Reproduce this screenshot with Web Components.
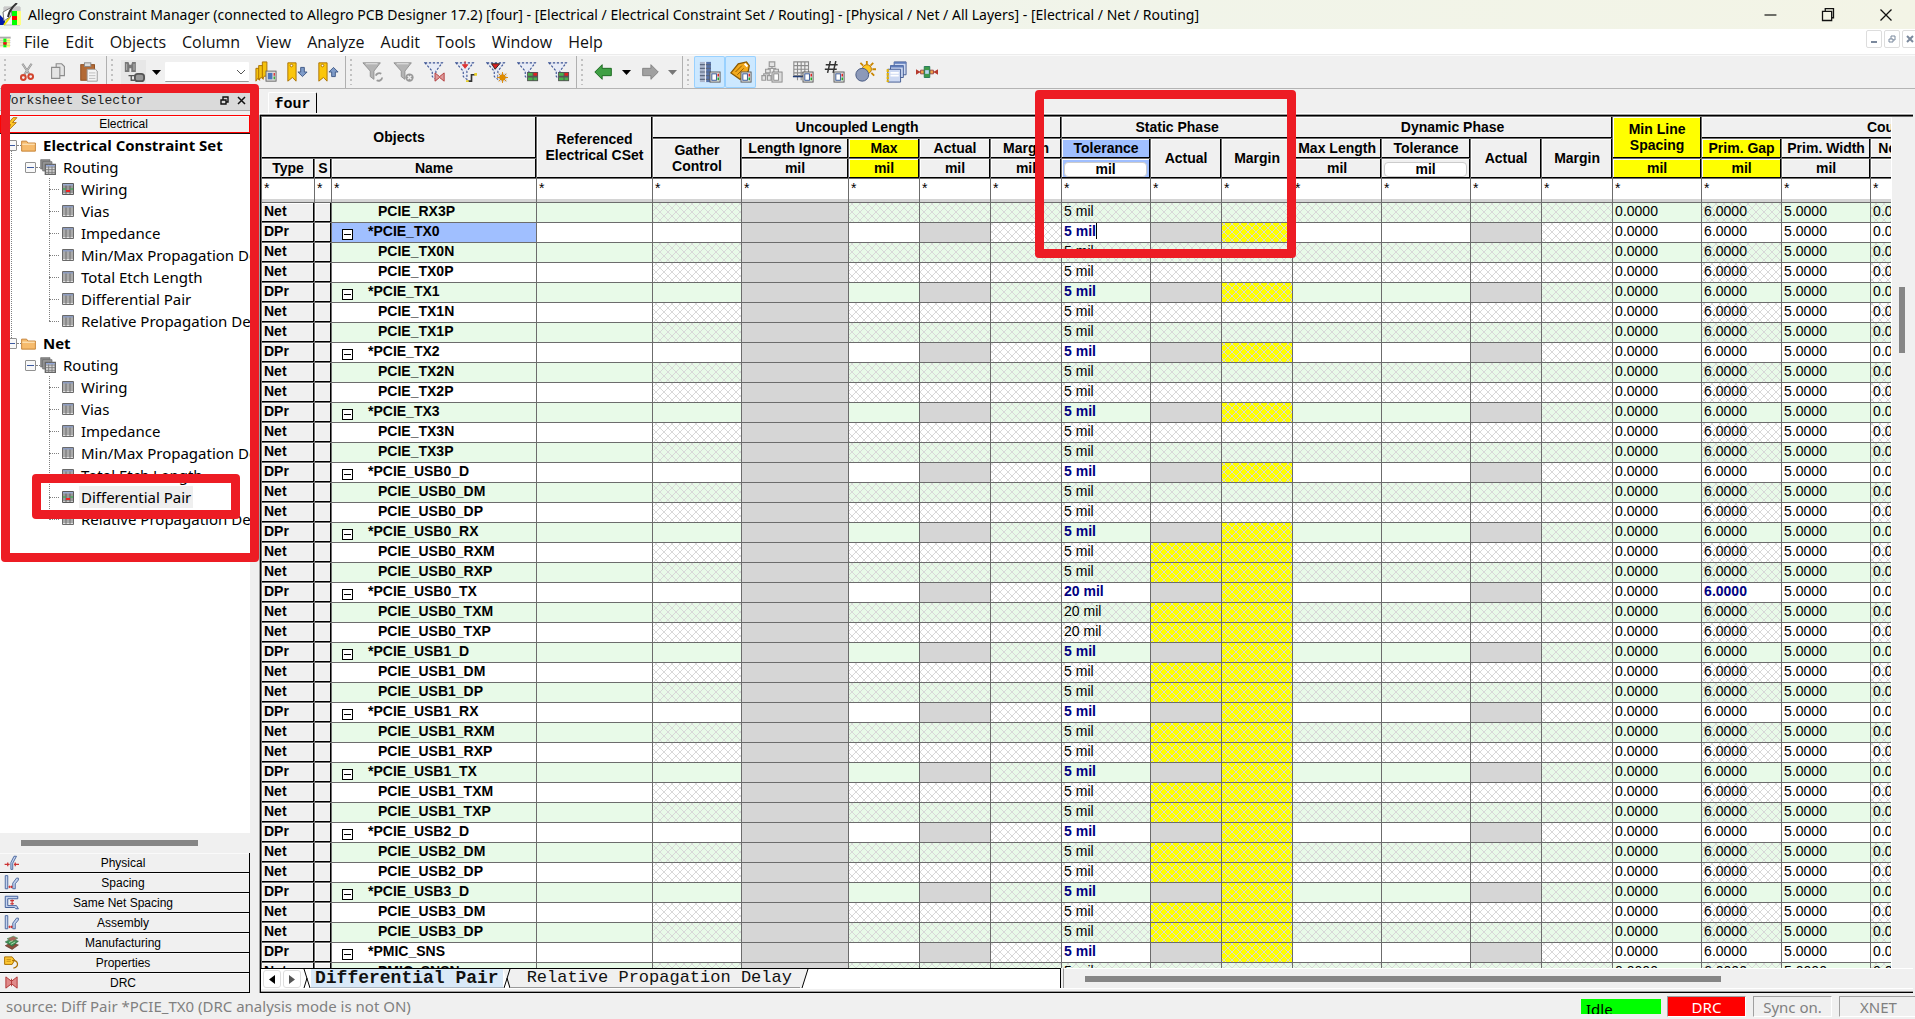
<!DOCTYPE html>
<html lang="en">
<head>
<meta charset="utf-8">
<title>Allegro Constraint Manager</title>
<style>
html, body { height: 100%; margin: 0; }
body { background: #f0f0f0; overflow: hidden; font: 14px "Liberation Sans", Arial, sans-serif; color: #000; }
</style>
</head>
<body>
<cm-app></cm-app>
<script>
const ICONS = {
  app: `<path d="M4 4h16v18h-16z" fill="#f4f4f4" stroke="#bbb"/><path d="M4 4h16v4h-16z" fill="#c9c9c9"/><path d="M12 8h5v14h-5z" fill="#0f0"/><path d="M17 8h4v14h-4z" fill="#ffff80"/><path d="M12 13h5v4h-5z" fill="#f00"/><path d="M0 12 3 15 5 13v9h-5z" fill="#0018a8"/><path d="M4 22 10 14" stroke="#e8e000" stroke-width="2"/><path d="M3 9 12 4l-1 9-7 5z" fill="#fff" stroke="#777"/><path d="M8 14C9 8 12 4 17 0" stroke="#333" stroke-width="2" fill="none"/>`,
  doc: `<path d="M0 4h16v3h-16z" fill="#aaa"/><path d="M0 7h5v13h-5z" fill="#f7e7c8"/><path d="M5 7h5v13h-5z" fill="#0f0"/><path d="M10 7h5v13h-5z" fill="#ff8"/><path d="M5 12h5v4h-5z" fill="#f00"/><path d="M0 10h16M0 13h16M0 17h16" stroke="#888" stroke-width=".5"/>`,
  cut: `<path d="M7 3 15 15M17 3 9 15" stroke="#8d8d8d" stroke-width="2.4"/><path d="M7 3 15 15M17 3 9 15" stroke="#d8d8d8" stroke-width=".8"/><circle cx="8" cy="18" r="2.6" fill="none" stroke="#d2452f" stroke-width="2.2"/><circle cx="16" cy="17" r="2.6" fill="none" stroke="#d2452f" stroke-width="2.2"/>`,
  copy: `<g fill="#e4e4e4" stroke="#8c8c8c" stroke-width="1.2"><path d="M10 3h6l3 3v10h-9z"/><path d="M5 7h9v12H5z"/></g>`,
  paste: `<rect x="3" y="4" width="15" height="17" fill="#b36a35" stroke="#8a4a1c"/><rect x="7" y="2" width="7" height="4" fill="#ddd" stroke="#888"/><path d="M10 9h9l2 2v11h-11z" fill="#f4f4f4" stroke="#999"/><path d="M12 13h7M12 16h7M12 19h7" stroke="#bbb"/>`,
  find: `<path d="M2 1h4l1 3h2l1-3h4v11h-5V8H7v4H2z" fill="#777"/><path d="M4 3v7M12 3v7" stroke="#bbb"/><rect x="13" y="14" width="10" height="8" rx="3" fill="#999" stroke="#555" stroke-width="2"/><path d="M6 16h7M9 16v5h4" stroke="#555" stroke-width="1.5" fill="none"/>`,
  marks: `<g fill="#f4c20d" stroke="#a86d00"><path d="M1 8h4v13l-2-2-2 3z"/><path d="M4 5h5v15l-2-2-3 2z"/><path d="M8 1h5v17l-2-2-3 3z"/></g><rect x="12" y="11" width="11" height="11" fill="#ddd" stroke="#666"/><rect x="14" y="13" width="5" height="7" fill="#4d76ba"/><path d="M21 13v3" stroke="#d33" stroke-width="1.5"/><path d="M21 17v3" stroke="#3a3" stroke-width="1.5"/>`,
  markdown: `<path d="M2 2h9v20l-4-4-5 4z" fill="#fbc60a" stroke="#a86d00"/><circle cx="6" cy="5" r="1.4" fill="#fff" stroke="#a86d00"/><path d="M16 7h4v5h3l-5 5-5-5h3z" fill="#7e9bc8" stroke="#3b5584"/>`,
  markup: `<path d="M2 2h9v20l-4-4-5 4z" fill="#fbc60a" stroke="#a86d00"/><circle cx="6" cy="5" r="1.4" fill="#fff" stroke="#a86d00"/><path d="M16 17h4v-5h3l-5-5-5 5h3z" fill="#7e9bc8" stroke="#3b5584"/>`,
  funref: `<path d="M1 2h19l-7 9v9l-4-3v-6z" fill="#b4b4b4" stroke="#8f8f8f"/><path d="M4 3h13" stroke="#eee"/><path d="M15 16a4 4 0 0 1 6-2M22 18a4 4 0 0 1-6 3" fill="none" stroke="#999" stroke-width="2"/>`,
  funoff: `<path d="M1 2h19l-7 9v9l-4-3v-6z" fill="#b4b4b4" stroke="#8f8f8f"/><path d="M4 3h13" stroke="#eee"/><circle cx="18" cy="18" r="4.5" fill="#999"/><path d="M16 16l4 4M20 16l-4 4" stroke="#eee" stroke-width="1.5"/>`,
  fun: `<path d="M1 2h19l-7 9v9l-4-3v-6z" fill="#e8ecf6" stroke="#3a5293" stroke-width="1.2" stroke-dasharray="2.5 1.8"/>`,
  grid4: `<rect x="11" y="12" width="12" height="10" fill="#555"/><path d="M12 13h5v3h-5zM12 18h5v3h-5zM18 18h4v3h-4z" fill="#4bb04b"/><path d="M18 13h4v3h-4z" fill="#e02020"/>`,
  back: `<path d="M2 12 10 4v4h10v8H10v4z" fill="#3fa044" stroke="#17651d"/>`,
  fwd: `<path d="M21 12 13 4v4H4v8h9v4z" fill="#a0a0a0" stroke="#808080"/>`,
  panel: `<rect x="12" y="12" width="11" height="11" fill="#e8e8e8" stroke="#555"/><rect x="14" y="14" width="5" height="7" fill="#fff" stroke="#2d4f90"/><path d="M21 14v3" stroke="#d22" stroke-width="1.6"/><path d="M21 18v3" stroke="#2a2" stroke-width="1.6"/>`,
  list: `<path d="M1 1h12v22H1z" fill="#aab6cc"/><path d="M8 1h5v22H8z" fill="#5672a8"/><path d="M1 4h12M1 8h12M1 12h12M1 16h12M1 20h12" stroke="#5b6880" stroke-width="1.3"/><path d="M7 1v22" stroke="#fff"/>`,
  tag: `<path d="M1 13 9 3l9-2 3 4-1 6-9 9z" fill="#f2a91d" stroke="#8a5800" stroke-width="1.4"/><path d="M6 12l7-7M8 15l7-7" stroke="#8a5800"/><path d="M16 3l3 3" stroke="#fff" stroke-width="2"/>`,
  tree: `<g fill="#e4e4e4" stroke="#999" stroke-width="1.3"><path d="M9 1h6v5H9zM5 9h5v4H5zM14 9h5v4h-5zM1 16h4v5H1zM7 16h4v5H7z"/><path d="M12 6v2M8 9V8h8v1M3 16v-2h6v2" fill="none"/></g>`,
  table: `<path d="M2 1h16v15H2zM6 1v20M10 1v20M14 1v15M2 5h16M2 9h16M2 13h16" fill="none" stroke="#8b8b8b" stroke-width="1.2"/><path d="M1 17h12" stroke="#223d77" stroke-width="1.5"/>`,
  hash: `<path d="M8 0 5 13M14 0 11 13M3 4h13M2 9h13" stroke="#333" stroke-width="1.6"/>`,
  sun: `<circle cx="14" cy="9" r="5" fill="#ffc820" stroke="#b36c00"/><path d="M14 0v4M21 2l-3 3M24 9h-4M22 16l-3-3M7 2l3 3" stroke="#c98600" stroke-width="2"/><circle cx="9" cy="15" r="7" fill="#8c99b8" stroke="#44567f"/>`,
  windows: `<g fill="#cdd9f2" stroke="#3d568e"><path d="M10 1h13v14H10z"/><path d="M6 5h14v13H6z"/><path d="M3 9h14v14H3z"/></g><path d="M10 2h13M6 6h14" stroke="#5f7cba" stroke-width="2"/><path d="M6 13h9M6 16h9" stroke="#fff" stroke-width="2"/><path d="M3 9v14" stroke="#e6b400" stroke-width="2.5" stroke-dasharray="3 1"/>`,
  net: `<path d="M4 12h16" stroke="#c33" stroke-width="2"/><path d="M0 9 5 12 0 15zM24 9 19 12 24 15z" fill="#b53a2e"/><path d="M5 10h4v4H5zM15 10h4v4h-4z" fill="#f3a24a" stroke="#944"/><path d="M9 6h6v12H9z" fill="#3e9b4a" stroke="#275"/><path d="M10 10h4v4h-4z" fill="#b7d4f3"/>`,
  bolt: `<path d="M13 1 4 12h5L5 22 18 9h-6l7-8z" fill="#ffc928" stroke="#b06a00" stroke-width="1.4"/>`,
  folder: `<path d="M1 5h8l2 3h12v13H1z" fill="#f6bb6d" stroke="#c07a2b" stroke-width="1.4"/><path d="M2 10h20" stroke="#fde2b6" stroke-width="2"/>`,
  sheets: `<path d="M1 1h14v14H1z" fill="#8a8a8a" stroke="#666"/><path d="M4 4h14v14H4z" fill="#999" stroke="#666"/><path d="M8 8h15v15H8z" fill="#d8d8d8" stroke="#666" stroke-width="2"/><path d="M8 12h15M8 16h15M8 20h15M13 8v15M18 8v15" stroke="#777" stroke-width="1.3"/><path d="M9 9h13v2H9z" fill="#93a7d8"/>`,
  sheet: `<path d="M1 1h22v22H1z" fill="#e0e0e0" stroke="#6a6a6a" stroke-width="2"/><path d="M1 6h22M1 10h22M1 14h22M1 18h22M8 1v22M16 1v22" stroke="#6a6a6a" stroke-width="1.8"/><path d="M2 2h20v3H2z" fill="#8d9cc0"/>`,
  sheeton: `<path d="M1 1h22v22H1z" fill="#ccc" stroke="#5a5a5a" stroke-width="2"/><path d="M1 6h22M1 10h22M1 14h22M1 18h22M8 1v22M16 1v22" stroke="#5a5a5a" stroke-width="1.8"/><path d="M2 2h20v3H2z" fill="#9aabd0"/><path d="M2 11h5v2H2zM17 11h5v2h-5z" fill="#1fb53c"/><path d="M8 14h8v4H8z" fill="#e22"/>`,
  physical: `<path d="M11 23V12L16 2h4L14 13v10z" fill="#c5d3ee" stroke="#4a669e" stroke-width="1.5"/><path d="M1 15h8M6 12v6M24 15h-8M18 12v6" stroke="#c33" stroke-width="2"/>`,
  spacing: `<path d="M2 1h4v21H2zM14 22V13L20 5h3v3L18 14v8z" fill="#c5d3ee" stroke="#4a669e" stroke-width="1.5"/><path d="M7 19h7M9 17v4M12 17v4" stroke="#c33" stroke-width="1.6"/>`,
  same: `<path d="M2 2h20v4H6v11h14l3 5h-4l-2-2H2z" fill="#c5d3ee" stroke="#3e5b97" stroke-width="1.5"/><path d="M13 7v9M10 9h6M10 14h6" stroke="#c33" stroke-width="1.8"/>`,
  board: `<path d="M2 17 12 12l11 4-10 7z" fill="#8b4f3c" stroke="#5a3428"/><path d="M2 11 12 6l11 4-10 8z" fill="#3f9155" stroke="#2d633c"/><path d="M5 6 15 2l7 3-9 6z" fill="#a8675b" stroke="#3f9155"/><path d="M8 12l6-3M11 15l7-4" stroke="#b5deb0" stroke-width="1.5"/>`,
  prop: `<path d="M1 3h12l4 5-4 7H1z" fill="#ffc935" stroke="#a97000" stroke-width="1.6"/><path d="M4 7h7M4 10h7" stroke="#a97000"/><path d="M13 9c10-2 12 10 2 12" fill="none" stroke="#a97000" stroke-width="2"/>`,
  drc: `<path d="M3 3 12 10 21 3v18L12 14 3 21z" fill="#e08a8a" stroke="#b23a3a" stroke-width="1.6"/><path d="M12 6v12" stroke="#b23a3a" stroke-width="1.5"/>`,
  min: `<path d="M6 12h13" stroke="#111" stroke-width="1.3"/>`,
  restore: `<path d="M6 8h10v10H6zM9 8V5h9v10h-2" fill="none" stroke="#111" stroke-width="1.4"/>`,
  close: `<path d="M6 6l12 12M18 6 6 18" stroke="#111" stroke-width="1.4"/>`
};
ICONS.fundrc = ICONS.fun + `<path d="M12 13l5 4 5-4v9l-5-4-5 4z" fill="#d99" stroke="#b23a3a"/>`;
ICONS.funpath = ICONS.fun + `<path d="M11 0v6M8 4l3 4 3-4z" stroke="#d33" fill="#d33"/><path d="M14 22h4v-7h4" fill="none" stroke="#333" stroke-width="1.8"/><path d="M21 13h3v3h-3zM12 21h3v2h-3z" fill="#e8cf2a"/>`;
ICONS.funsun = ICONS.fun + `<path d="M6 3h9l-5 6z" fill="#d22" stroke="#222"/><path d="M13 13h10v10h-10z" fill="#ddd"/><circle cx="18" cy="18" r="3" fill="#fb0" stroke="#b60"/><path d="M18 12v12M12 18h12M14 14l8 8M22 14l-8 8" stroke="#d80"/>`;
ICONS.fungrid = ICONS.fun + ICONS.grid4;
ICONS.listp = ICONS.list + ICONS.panel;
ICONS.tagp = ICONS.tag + ICONS.panel;
ICONS.treep = ICONS.tree + `<rect x="12" y="12" width="11" height="11" fill="#ddd" stroke="#888"/><rect x="14" y="14" width="5" height="7" fill="#fff" stroke="#888"/>`;
ICONS.tablep = ICONS.table + ICONS.panel;
ICONS.hashp = ICONS.hash + ICONS.panel;

class Base extends HTMLElement {
  connectedCallback() {
    if (this.shadowRoot) return;
    this.attachShadow({ mode: 'open' }).innerHTML = this.view();
  }
}
const UI = 'font-family:"Noto Sans","Open Sans",sans-serif;';
const OPEN = 'font-family:"Open Sans","Noto Sans",sans-serif;';
const MONO = 'font-family:"Liberation Mono",monospace;';

customElements.define('cm-icon', class extends Base {
  view() {
    return `<style>:host{display:inline-block;width:var(--size,24px);height:var(--size,24px);flex:none}svg{display:block;width:100%;height:100%}</style>
    <svg viewBox="0 0 24 24" fill="none" aria-hidden="true">${ICONS[this.getAttribute('name')]}</svg>`;
  }
});

customElements.define('cm-title-bar', class extends Base {
  view() {
    return `<style>
    :host{display:flex;align-items:center;height:29px;background:linear-gradient(90deg,#eef4ee,#f3f4e6);${UI}font-size:14px}
    cm-icon{--size:24px}h1{font:inherit;margin:0 0 0 4px;flex:1;white-space:nowrap}
    button{border:0;background:none;padding:0;width:58px;height:29px;display:grid;place-items:center}
    button cm-icon{--size:22px}
    </style><cm-icon name="app"></cm-icon><h1><slot></slot></h1>
    <button aria-label="Minimize"><cm-icon name="min"></cm-icon></button><button aria-label="Restore"><cm-icon name="restore"></cm-icon></button><button aria-label="Close"><cm-icon name="close"></cm-icon></button>`;
  }
});

customElements.define('cm-menu-bar', class extends Base {
  view() {
    const items = ['File','Edit','Objects','Column','View','Analyze','Audit','Tools','Window','Help'];
    return `<style>
    :host{display:flex;align-items:center;height:25px;background:#fff;${OPEN}font-size:16px;border-bottom:1px solid #ececec;overflow:hidden}
    nav{display:flex;flex:1}nav button{font:inherit;line-height:24px;border:0;background:none;padding:0 8px;color:#111}
    cm-icon{--size:22px;width:16px}
    .w{display:flex;gap:2px;margin-right:-3px;align-self:flex-start;padding-top:1px}.w button{width:16px;height:18px;box-sizing:border-box;padding:0;border:1px solid #ddd;border-radius:2px;background:#fff;display:grid;place-items:center}
    svg{display:block}
    </style><cm-icon name="doc"></cm-icon><nav>${items.map(t => `<button>${t}</button>`).join('')}</nav>
    <div class="w"><button aria-label="Minimize sheet"><svg width="8" height="8"><path d="M1 7h6" stroke="#7b899d" stroke-width="2"/></svg></button>
    <button aria-label="Restore sheet"><svg width="8" height="8"><path d="M1 4h4v3H1zM3 4V1h4v4H5" stroke="#7b899d" fill="none"/></svg></button>
    <button aria-label="Close sheet"><svg width="8" height="8"><path d="M1 1l6 6M7 1 1 7" stroke="#7b899d" stroke-width="2"/></svg></button></div>`;
  }
});

customElements.define('cm-toolbar', class extends Base {
  view() {
    const b = (n, l, c = '') => `<button class="${c}" aria-label="${l}"><cm-icon name="${n}"></cm-icon></button>`;
    const caret = (c = '#000') => `<button class="caret" aria-label="More"><svg width="9" height="5"><path d="M0 0h9L4.5 5z" fill="${c}"/></svg></button>`;
    return `<style>
    :host{display:flex;height:32px;background:#f0f0f0;border-top:1px solid #fafafa;border-bottom:1px solid #b4b4b4}
    .g{display:flex;align-items:center;border-right:1px solid #b0b0b0;padding-right:2px}.g:last-child{border:0}
    .g::before{content:"";width:2px;height:26px;margin:0 5px 0 4px;background:repeating-linear-gradient(#c2c2c2 0 2px,transparent 2px 5px)}
    button{border:0;padding:0;background:none;width:31px;height:32px;display:grid;place-items:center}
    cm-icon{--size:22px}
    .on{background:#cce8ff;box-shadow:inset 0 0 0 1px #99d1ff;border-radius:2px}
    .caret{width:15px}
    .find{width:25px;height:24px;background:#e7e7e7;margin:0 3px}
    select{appearance:none;width:84px;height:20px;border:0;border-bottom:1px solid #999;background:#fff;margin:0 1px;border-radius:1px}
    .combo{display:grid;align-items:center}.combo>*{grid-area:1/1}.combo svg{justify-self:end;margin-right:4px;pointer-events:none}
    </style>
    <div class="g">${b('cut','Cut')}${b('copy','Copy')}${b('paste','Paste')}</div>
    <div class="g">${b('find','Find','find')}${caret()}<div class="combo"><select aria-label="Find text"><option></option></select><svg width="10" height="6"><path d="M1 1l4 4 4-4" stroke="#555" fill="none"/></svg></div>${b('marks','Bookmarks')}${b('markdown','Next bookmark')}${b('markup','Previous bookmark')}</div>
    <div class="g">${b('funref','Refresh filter')}${b('funoff','Clear filter')}${b('fundrc','Filter DRC')}${b('funpath','Filter path')}${b('funsun','Filter analysis')}${b('fungrid','Filter table')}${b('fungrid','Filter row')}</div>
    <div class="g">${b('back','Back')}${caret()}${b('fwd','Forward')}${caret('#777')}</div>
    <div class="g">${b('listp','List','on')}${b('tagp','Properties','on')}${b('treep','Hierarchy')}${b('tablep','Table')}${b('hashp','Numbers')}${b('sun','Analyze')}${b('windows','Reports')}${b('net','Net')}</div>`;
  }
});

customElements.define('cm-tree', class extends Base {
  view() {
    const leaves = ['Wiring','Vias','Impedance','Min/Max Propagation Delays','Total Etch Length','Differential Pair','Relative Propagation Delay'];
    const group = (name, on, sel) => `<li><div class="r top"><i class="box"></i><i class="dash"></i><cm-icon name="folder"></cm-icon><b>${name}</b></div>
      <ul><li><div class="r mid"><i class="box"></i><i class="dash"></i><cm-icon name="sheets"></cm-icon><span>Routing</span></div>
      <ul class="leaves">${leaves.map((t, i) => `<li class="r leaf"><i class="dash"></i><cm-icon name="${i === on ? 'sheeton' : 'sheet'}"></cm-icon><span class="${sel && i === on ? 'sel' : ''}">${t}</span></li>`).join('')}</ul></li></ul></li>`;
    return `<style>
    :host{display:block;overflow:hidden;background:#fff;${UI}font-size:15px;line-height:22px;white-space:nowrap}
    ul{list-style:none;margin:0;padding:0}
    .r{display:flex;align-items:center;height:22px}
    .box{width:9px;height:9px;flex:none;border:1px solid #919191;border-radius:1px;background:linear-gradient(#3c5aa0,#3c5aa0) center/7px 1px no-repeat,#f8f8f8}
    .dash{border-top:1px dotted #808080;flex:none;width:4px}
    .top{padding-left:6px}.top cm-icon{--size:15px}.top b{margin-left:7px;${OPEN}}
    .mid{padding-left:25px}.mid cm-icon{--size:16px}.mid span{margin-left:7px}
    .leaves{margin-left:49px;background:linear-gradient(#fff,#fff) 0 100%/1px 11px no-repeat,repeating-linear-gradient(#808080 0 1px,#fff 1px 2px) 0 0/1px 100% no-repeat}
    .leaf .dash{width:10px}.leaf cm-icon{--size:12px;margin-left:3px}.leaf span{margin-left:5px;padding:0 2px}
    .sel{background:#efefef}
    .root{background:repeating-linear-gradient(#808080 0 1px,#fff 1px 2px) 11px 11px/1px 198px no-repeat}
    </style><ul class="root">${group('Electrical Constraint Set', 0, false)}${group('Net', 5, true)}</ul>`;
  }
});

customElements.define('cm-domain-button', class extends Base {
  view() {
    return `<style>
    :host{display:block}
    button{display:flex;align-items:center;width:100%;height:20px;box-sizing:border-box;padding:0;border:0;border-right:1px solid #000;border-bottom:1px solid #000;background:#f0f0f0;font:12px "Liberation Sans",sans-serif;box-shadow:inset 0 1px #fafafa;color:#000}
    :host([active]) button{border:1px solid #f00;height:18px}
    cm-icon{--size:15px;margin-left:4px}
    span{flex:1;text-align:center;margin-right:22px}
    </style><button><cm-icon name="${this.getAttribute('icon')}"></cm-icon><span><slot></slot></span></button>`;
  }
});

customElements.define('cm-selector', class extends Base {
  view() {
    const d = [['physical','Physical'],['spacing','Spacing'],['same','Same Net Spacing'],['spacing','Assembly'],['board','Manufacturing'],['prop','Properties'],['drc','DRC']];
    return `<style>
    :host{display:flex;flex-direction:column;width:250px;flex:none}
    header{display:flex;align-items:center;height:22px;background:#dadada;border-bottom:1px solid #aaa;${MONO}font-size:13px;padding:2px 0 0 3px;box-sizing:border-box;color:#222}
    h2{font:inherit;margin:0;flex:1}header button{border:0;background:none;padding:0;width:17px;height:17px;display:grid;place-items:center}
    cm-domain-button[active]{margin-top:4px;border-bottom:1px solid #111}
    cm-tree{flex:1;min-height:0}
    .s{height:20px;display:flex;align-items:center;padding-left:21px}.s i{width:177px;height:6px;background:#868686}
    </style>
    <header><h2>Worksheet Selector</h2><button aria-label="Float"><svg width="9" height="9"><path d="M1 4h5v4H1zM3 4V1h5v5H6" stroke="#111" stroke-width="1.4" fill="none"/></svg></button><button aria-label="Close"><svg width="9" height="9"><path d="M1 1l7 7M8 1 1 8" stroke="#111" stroke-width="1.5"/></svg></button></header>
    <cm-domain-button active icon="bolt">Electrical</cm-domain-button>
    <cm-tree></cm-tree><div class="s"><i></i></div>
    ${d.map(([i, t]) => `<cm-domain-button icon="${i}">${t}</cm-domain-button>`).join('')}`;
  }
});

customElements.define('cm-constraint-table', class extends Base {
  view() {
    const widths = [53,17,205,116,89,107,71,71,71,89,71,71,89,89,71,71,89,80,89,80,89,89];
    const pairs = [['TX0','N','P'],['TX1','N','P'],['TX2','N','P'],['TX3','N','P'],['USB0_D','M','P'],['USB0_RX','M','P'],['USB0_TX','M','P'],['USB1_D','M','P'],['USB1_RX','M','P'],['USB1_TX','M','P'],['USB2_D','M','P'],['USB3_D','M','P']];
    const rows = [{ n: 'PCIE_RX3P', t: '5 mil' }];
    pairs.forEach(([p, a, b], i) => {
      const t = p === 'USB0_TX' ? '20 mil' : '5 mil';
      rows.push({ n: 'PCIE_' + p, d: true, t, sel: i === 0, own: p === 'USB0_TX' });
      [a, b].forEach(s => rows.push({ n: 'PCIE_' + p + s, t, y: i > 4 }));
    });
    rows.push({ n: 'PMIC_SNS', d: true, t: '5 mil' }, { n: 'PMIC_SNSN', t: '5 mil' });
    const td = (c, t = '') => `<td class="${c}">${t}</td>`;
    const row = r => {
      const h = r.d ? '' : 'h', hy = r.y ? 'h y' : 'h';
      return `<tr><th scope="row" class="hd l">${r.d ? 'DPr' : 'Net'}</th><td class="hd"></td>` +
        `<td class="name ${r.sel ? 'sel' : ''} ${r.d ? 'pair' : ''}">${r.d ? `<div><button aria-label="Collapse"></button><span>*${r.n}</span></div>` : r.n}</td>` +
        td('') + td(h) + td('g') + td(h) + td(r.d ? 'g' : 'h') + td('h') +
        td(r.d ? 'own' + (r.sel ? ' edit' : '') : 'h', `<span>${r.t}</span>`) + td(r.d ? 'g' : hy) + td(r.d ? 'h y' : hy) +
        td(h) + td(h) + td(r.d ? 'g' : 'h') + td('h') + td('', '0.0000') + td(r.own ? 'own' : h, '6.0000') + td('', '5.0000') + td(h, '0.0000') + td(h) + td(h) + '</tr>';
    };
    const unit = `<select aria-label="Tolerance unit"><option>mil</option></select>`;
    let px = '';
    for (let i = 0; i < 8; i++) px += `M${i} ${i}h1v1h-1zM${7 - i} ${i}h1v1h-1z`;
    const hatch = `url("data:image/svg+xml,%3Csvg xmlns='http://www.w3.org/2000/svg' width='8' height='8' shape-rendering='crispEdges'%3E%3Cpath fill='%23d8d8d8' d='${px}'/%3E%3C/svg%3E")`;
    return `<style>
    :host{display:block;overflow:hidden}
    table{table-layout:fixed;width:0;border-collapse:separate;border-spacing:0;font-size:14px;line-height:16px}
    th,td{box-sizing:border-box;padding:0 0 3px 2px;border-right:1px solid #6c6c6c;border-bottom:1px solid #6c6c6c;overflow:hidden;white-space:nowrap;text-align:left;background-color:#fff}
    th{font-weight:bold}
    thead th,.hd{background-color:#f0f0f0;box-shadow:inset -1px -1px #000,inset 1px 1px #fff}
    thead th{text-align:center;padding:0 0 2px}
    thead tr{height:20px}thead tr:first-child{height:22px}thead tr.f{height:24px}
    thead td{vertical-align:top;padding-top:1px;box-shadow:inset 0 -3px #d4d4d4}
    thead th.y{background-color:#ff0}thead th.b{background-color:#a0bfff}
    thead th.u{padding:0}
    tbody tr{height:20px}
    tbody tr:nth-child(odd) td:not(.hd,.g,.y){background-color:#e8fae8}
    tbody td.g{background-color:#d6d6d6}
    tbody td.h{background-image:${hatch};background-attachment:fixed}
    tbody td.y{background-color:#ff0}
    .own{font-weight:bold;color:#000080}
    .edit span{border-right:1px solid #000}
    .name{font-weight:bold;padding-left:46px}
    .name.pair{padding:0 0 0 10px}
    .name div{display:flex;height:19px;line-height:16px}
    .name button{width:11px;height:11px;box-sizing:border-box;padding:0;border:1px solid #000;background:linear-gradient(#000,#000) center/7px 1px no-repeat,#fff;align-self:flex-end;margin:0 15px 2px 0}
    tbody .name.sel{background-color:#a0bfff}
    select{appearance:none;display:block;width:calc(100% - 5px);height:15px;margin:1px 0 0 2px;padding:0;border:1px solid #ccc;border-radius:4px;background:#fff;font:inherit;line-height:13px;text-align:center;text-align-last:center;color:#000}
    </style><table><colgroup>${widths.map(w => `<col style="width:${w}px">`).join('')}</colgroup>
    <thead>
    <tr><th colspan="3" rowspan="2">Objects</th><th rowspan="3">Referenced<br>Electrical CSet</th><th colspan="5">Uncoupled Length</th><th colspan="3">Static Phase</th><th colspan="4">Dynamic Phase</th><th rowspan="2" class="y">Min Line<br>Spacing</th><th colspan="5">Coupled Lines</th></tr>
    <tr><th rowspan="2">Gather<br>Control</th><th>Length Ignore</th><th class="y">Max</th><th>Actual</th><th>Margin</th><th class="b">Tolerance</th><th rowspan="2">Actual</th><th rowspan="2">Margin</th><th>Max Length</th><th>Tolerance</th><th rowspan="2">Actual</th><th rowspan="2">Margin</th><th class="y">Prim. Gap</th><th>Prim. Width</th><th>Neck Gap</th><th></th><th></th></tr>
    <tr><th>Type</th><th>S</th><th>Name</th><th>mil</th><th class="y">mil</th><th>mil</th><th>mil</th><th class="b u">${unit}</th><th>mil</th><th class="u">${unit}</th><th class="y">mil</th><th class="y">mil</th><th>mil</th><th></th><th></th><th></th></tr>
    <tr class="f">${widths.map(() => '<td>*</td>').join('')}</tr>
    </thead><tbody>${rows.map(row).join('')}</tbody></table>`;
  }
});

customElements.define('cm-sheet-tabs', class extends Base {
  view() {
    return `<style>
    :host{display:flex;height:20px;flex:none;${MONO}}
    .t{display:flex;width:800px;background:#fff;border-top:1px solid #000;border-right:1px solid #000;box-sizing:border-box;flex:none}
    button{padding:0;font-family:inherit;color:#111}
    .n{width:18px;height:18px;box-sizing:border-box;border:1px solid #ddd;border-radius:3px;background:#fff;margin:1px 0 0 2px;display:grid;place-items:center}
    .t svg.l{margin-left:2px}
    .on{font-size:18px;font-weight:bold;background:#d9e9f8;border:0;border-bottom:1px solid #a8b4c0;padding:0 4px;line-height:19px}
    .off{font-size:17px;background:#f0f0f0;border:0;border-bottom:1px solid #999;padding:0 8px 0 16px;line-height:18px;flex:none}
    svg{display:block;flex:none}
    .s{flex:1;display:flex;align-items:center;margin-left:2px;border-left:1px solid #999;padding-left:21px;box-sizing:border-box;border-top:1px solid #fff;padding-bottom:0}
    .s i{width:636px;height:6px;background:#868686}
    </style>
    <div class="t"><button class="n" aria-label="Previous tab"><svg width="6" height="9"><path d="M6 0v9L0 4.5z" fill="#000"/></svg></button><button class="n" aria-label="Next tab"><svg width="6" height="9"><path d="M0 0v9L6 4.5z" fill="#555"/></svg></button>
    <svg class="l" width="8" height="19"><path d="M1 0 7 19M4 9 1 19" stroke="#000" fill="none"/></svg><button class="on">Differential Pair</button>
    <svg width="8" height="19"><path d="M0 0h8v19H6z" fill="#f0f0f0"/><path d="M7 0 1 19M4 9 7 19" stroke="#000" fill="none"/></svg><button class="off">Relative Propagation Delay</button><svg width="9" height="19"><path d="M0 0h8L2 19H0z" fill="#f0f0f0"/><path d="M8 0 2 19" stroke="#000"/></svg></div>
    <div class="s"><i></i></div>`;
  }
});

customElements.define('cm-workbook', class extends Base {
  view() {
    return `<style>
    :host{display:flex;flex-direction:column;flex:1;min-width:0;margin:0 2px 0 9px}
    header{height:24px;display:flex;align-items:flex-end;border-bottom:1px solid #fff;padding-left:9px}
    header button{${MONO}font-size:15px;font-weight:bold;border:0;border-left:1px solid #fff;border-top:1px solid #fff;border-right:1px solid #000;background:#f0f0f0;height:21px;width:49px;padding:2px 0 0;border-radius:2px 2px 0 0;color:#000}
    .f{flex:1;min-height:0;display:flex;flex-direction:column;border:1px solid #000;border-right:0;box-shadow:0 -1px #a0a0a0,-1px 0 #a0a0a0;margin:1px 0 0 1px}
    .g{flex:1;min-height:0;display:flex;border:solid #6c6c6c;border-width:1px 0 0 1px}
    cm-constraint-table{flex:1;min-width:0}
    .v{width:22px;padding-top:170px;display:flex;justify-content:center;align-items:flex-start;box-sizing:border-box;box-shadow:inset 1px 0 #fff}.v i{width:6px;height:66px;background:#868686}
    .e{height:4px;border-top:1px solid #fff;border-bottom:1px solid #a0a0a0;box-sizing:border-box}
    </style><header><button>four</button></header>
    <div class="f"><div class="g"><cm-constraint-table></cm-constraint-table><div class="v"><i></i></div></div><cm-sheet-tabs></cm-sheet-tabs><div class="e"></div></div>`;
  }
});

customElements.define('cm-status-bar', class extends Base {
  view() {
    return `<style>
    :host{display:flex;align-items:center;height:26px;${UI}font-size:15px;color:#808080;padding-left:6px;overflow:hidden;white-space:nowrap}
    p{margin:0;flex:1}
    .c{width:79px;height:21px;box-sizing:border-box;border:1px solid #a0a0a0;border-right-color:#fff;border-bottom-color:#fff;text-align:center;line-height:20px;margin-left:7px}
    .idle{width:80px;height:15px;background:#0f0;color:#000;padding-left:5px;box-sizing:border-box;overflow:hidden;line-height:20px}
    .drc{background:#f00;color:#fff;margin-left:6px}.x{margin-right:-3px}
    </style><p><slot></slot></p><div class="idle">Idle</div><div class="c drc">DRC</div><div class="c">Sync on.</div><div class="c x">XNET</div>`;
  }
});

customElements.define('cm-callout', class extends Base {
  view() {
    return `<style>:host{position:absolute;box-sizing:border-box;border:9px solid #ed1c24;border-radius:4px;pointer-events:none}</style>`;
  }
});

customElements.define('cm-app', class extends Base {
  view() {
    return `<style>
    :host{display:flex;flex-direction:column;height:100vh;position:relative;overflow:hidden}
    main{flex:1;min-height:0;display:flex}
    .a{left:1px;top:84px;width:258px;height:478px}.b{left:32px;top:474px;width:208px;height:45px}.c{left:1035px;top:90px;width:261px;height:168px}
    </style>
    <cm-title-bar>Allegro Constraint Manager (connected to Allegro PCB Designer 17.2) [four] - [Electrical / Electrical Constraint Set / Routing] - [Physical / Net / All Layers] - [Electrical / Net / Routing]</cm-title-bar>
    <cm-menu-bar></cm-menu-bar><cm-toolbar></cm-toolbar>
    <main><cm-selector></cm-selector><cm-workbook></cm-workbook></main>
    <cm-status-bar>source: Diff Pair *PCIE_TX0 (DRC analysis mode is not ON)</cm-status-bar>
    <cm-callout class="a"></cm-callout><cm-callout class="b"></cm-callout><cm-callout class="c"></cm-callout>`;
  }
});
</script>
</body>
</html>
